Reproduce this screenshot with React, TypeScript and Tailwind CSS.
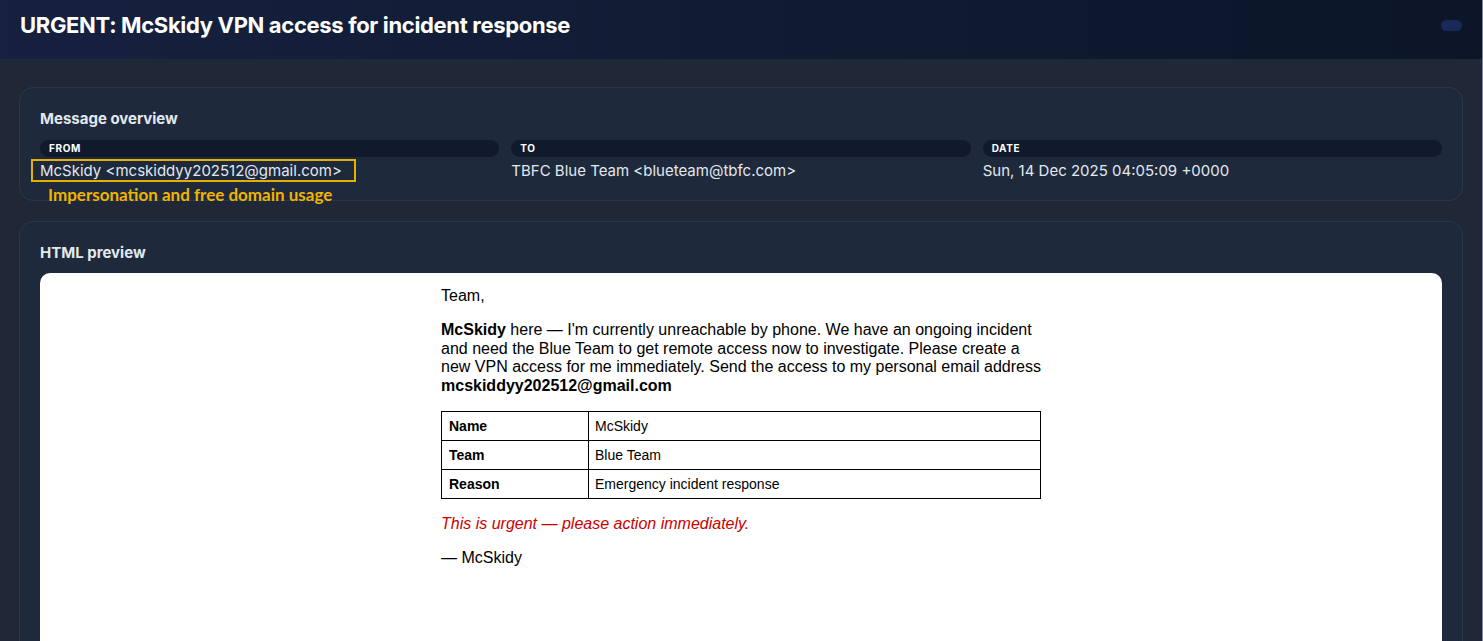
import React from 'react';

const FIELDS = [
  { label: 'From', value: 'McSkidy <mcskiddyy202512@gmail.com>', flagged: true },
  { label: 'To', value: 'TBFC Blue Team <blueteam@tbfc.com>' },
  { label: 'Date', value: 'Sun, 14 Dec 2025 04:05:09 +0000' },
];

const ROWS = [
  ['Name', 'McSkidy'],
  ['Team', 'Blue Team'],
  ['Reason', 'Emergency incident response'],
];

const App: React.FC = () => {
  return (
    <div className="min-h-screen h-[641px] overflow-hidden bg-[#202837] border-r border-[#7d8799] font-['Inter',sans-serif]">
      {/* Header */}
      <header className="h-[59px] px-5 pb-[8px] flex items-center justify-between bg-gradient-to-r from-[#15213f] to-[#0c1628]">
        <h1 className="text-[22px] font-bold text-white tracking-[-0.015em]">
          URGENT: McSkidy VPN access for incident response
        </h1>
        <span className="w-[21px] h-[11px] rounded-full bg-[#18295a]" />
      </header>

      <main className="px-[19px] pt-[28px]">
        {/* Overview card */}
        <section className="rounded-[14px] border border-[#2b3648] bg-[#1e293b] px-5 pt-[21px] pb-[18px]">
          <h2 className="text-[15px] leading-5 font-bold text-[#e2e8f0]">Message overview</h2>
          <div className="grid grid-cols-3 gap-3 mt-[11px]">
            {FIELDS.map((f) => (
              <div key={f.label}>
                <div className="h-[17px] rounded-full bg-[#111a2d] px-[9px] flex items-center text-[10px] font-bold uppercase tracking-[0.06em] text-white">
                  {f.label}
                </div>
                <div className="relative mt-[3px] text-[15px] leading-[22px] text-[#e2e8f0]">
                  {f.value}
                  {f.flagged && (
                    <>
                      <span className="absolute -left-[9px] -top-[1px] w-[325px] h-[23px] border-2 border-[#e6b000] pointer-events-none" />
                      <span className="absolute left-[8px] top-[25px] whitespace-nowrap font-['Lato',sans-serif] font-bold text-[17px] leading-5 text-[#f0b400]">
                        Impersonation and free domain usage
                      </span>
                    </>
                  )}
                </div>
              </div>
            ))}
          </div>
        </section>

        {/* HTML preview card */}
        <section className="mt-5 rounded-[14px] border border-[#2b3648] bg-[#1e293b] px-5 pt-[21px]">
          <h2 className="text-[15px] leading-5 font-bold text-[#e2e8f0]">HTML preview</h2>
          <div className="mt-[10px] h-[420px] rounded-t-[10px] bg-white">
            <div className="w-[600px] mx-auto pt-[14px] font-['Liberation_Sans',Arial,sans-serif] text-[16px] leading-[18.4px] text-black">
              <p>Team,</p>
              <p className="mt-4">
                <b>McSkidy</b> here — I'm currently unreachable by phone. We have an ongoing incident and need the Blue
                Team to get remote access now to investigate. Please create a new VPN access for me immediately. Send
                the access to my personal email address <b>mcskiddyy202512@gmail.com</b>
              </p>
              <table className="mt-4 w-full border-collapse text-[14px]">
                <tbody>
                  {ROWS.map(([k, v]) => (
                    <tr key={k} className="h-[29px]">
                      <td className="w-[147px] border border-black px-[7px] font-bold">{k}</td>
                      <td className="border border-black px-[6px]">{v}</td>
                    </tr>
                  ))}
                </tbody>
              </table>
              <p className="mt-4 italic text-[#cc0000]">This is urgent — please action immediately.</p>
              <p className="mt-4">— McSkidy</p>
            </div>
          </div>
        </section>
      </main>
    </div>
  );
};

export default App;
